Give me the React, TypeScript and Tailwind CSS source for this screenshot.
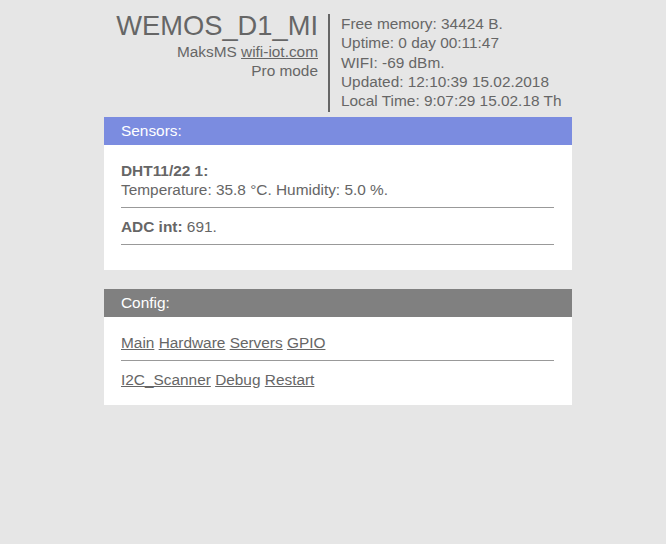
import React from "react";

const Rule = () => <div className="h-px bg-[#999] mt-2 mb-[9px]" />;

const Panel = ({
  title,
  head,
  children,
  pb,
}: {
  title: string;
  head: string;
  children: React.ReactNode;
  pb: string;
}) => (
  <div className="w-[468px] bg-white">
    <div className={`${head} h-[28px] pl-[17px] leading-[28px] text-white`}>{title}</div>
    <div className={`pl-[17px] pr-[18px] pt-4 ${pb}`}>{children}</div>
  </div>
);

export default function App() {
  return (
    <div
      className="min-h-[544px] bg-[#e6e6e6] text-[15.4px] leading-[19.25px] text-[#666]"
      style={{ fontFamily: '"Liberation Sans", Arial, sans-serif' }}
    >
      <div className="ml-[104px] pt-[14px] flex flex-col">
        <div className="flex h-[98px]">
          <div className="w-[224px] pr-[10px] text-right">
            <div className="text-[27.3px] leading-[32px] mt-[-4px]">WEMOS_D1_MI</div>
            <div>
              MaksMS <a className="underline" href="#">wifi-iot.com</a>
            </div>
            <div>Pro mode</div>
          </div>
          <div className="border-l-2 border-[#666] pl-[11px] whitespace-nowrap">
            <div>Free memory: 34424 B.</div>
            <div>Uptime: 0 day 00:11:47</div>
            <div>WIFI: -69 dBm.</div>
            <div>Updated: 12:10:39 15.02.2018</div>
            <div>Local Time: 9:07:29 15.02.18 Th</div>
          </div>
        </div>

        <div className="mt-[5px]">
          <Panel title="Sensors:" head="bg-[#7b8ce0]" pb="pb-[25px]">
            <div className="leading-[19px]">
              <b>DHT11/22 1:</b>
              <br />
              Temperature: 35.8 °C. Humidity: 5.0 %.
            </div>
            <Rule />
            <div className="leading-[19px]">
              <b>ADC int:</b> 691.
            </div>
            <div className="h-px bg-[#999] mt-2" />
          </Panel>
        </div>

        <div className="mt-[19px]">
          <Panel title="Config:" head="bg-[#808080]" pb="pb-4">
            <div className="leading-[19px]">
              <a className="underline" href="#">Main</a>{" "}
              <a className="underline" href="#">Hardware</a>{" "}
              <a className="underline" href="#">Servers</a>{" "}
              <a className="underline" href="#">GPIO</a>
            </div>
            <Rule />
            <div className="leading-[19px]">
              <a className="underline" href="#">I2C_Scanner</a>{" "}
              <a className="underline" href="#">Debug</a>{" "}
              <a className="underline" href="#">Restart</a>
            </div>
          </Panel>
        </div>
      </div>
    </div>
  );
}
